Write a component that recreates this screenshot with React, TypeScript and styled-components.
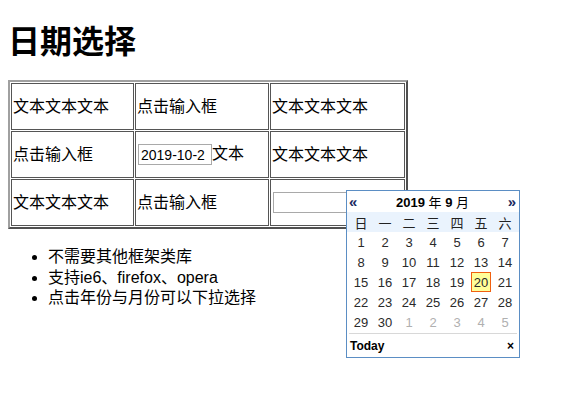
import React from "react";
import styled, { createGlobalStyle } from "styled-components";

const Global = createGlobalStyle`
  html, body { background: #fff; margin: 0; padding: 0; }
  body {
    font-family: "Liberation Sans", "Noto Sans CJK SC", sans-serif;
    color: #000;
  }
`;

const Page = styled.div`
  position: relative;
  display: flow-root;
  box-sizing: border-box;
  min-height: 416px;
  padding: 8px;
`;

const Title = styled.h1`
  font-size: 32px;
  font-weight: bold;
  line-height: 37px;
  margin: 15.5px 0 19.5px;
`;

const Table = styled.table`
  width: 400px;
  border-collapse: separate;
  border-spacing: 1px;
  border: 2px solid;
  border-color: #a0a0a0 #505050 #505050 #a0a0a0;
  table-layout: fixed;
`;

const Cell = styled.td<{ $w?: number }>`
  width: ${(p) => (p.$w ? `${p.$w}px` : "auto")};
  height: 47px;
  box-sizing: border-box;
  border: 1px solid #555;
  padding: 1px;
  font-size: 16px;
  line-height: 20px;
  vertical-align: middle;
  white-space: nowrap;
`;

const DateInput = styled.input`
  box-sizing: border-box;
  width: 74px;
  height: 21px;
  border: 1px solid #a9a9a9;
  padding: 1px 2px;
  font-family: "Liberation Sans", sans-serif;
  font-size: 14px;
  vertical-align: middle;
  margin: 0 0 0 1px;
  outline: none;
  background: #fff;
`;

const List = styled.ul`
  margin: 18px 0 16px;
  padding-left: 40px;
  font-size: 16px;
  line-height: 20.5px;
`;

const Picker = styled.div`
  position: absolute;
  left: 346px;
  top: 190px;
  width: 174px;
  height: 168px;
  box-sizing: border-box;
  border: 1px solid #5b8ec4;
  background: #fff;
  font-family: "Liberation Sans", "Noto Sans CJK SC", sans-serif;
  font-size: 12px;
  display: flex;
  flex-direction: column;
`;

const Header = styled.div`
  height: 21px;
  flex: none;
  display: flex;
  align-items: center;
  justify-content: space-between;
  padding: 0 3px 0 2px;
  font-size: 13px;
`;

const Nav = styled.span`
  font-weight: bold;
  font-size: 15px;
  color: #1a2a60;
`;

const Month = styled.span`
  color: #000;
  b { font-weight: bold; }
`;

const Grid = styled.div`
  display: grid;
  flex: none;
  grid-template-columns: repeat(7, 24px);
  padding: 0 2px;
`;

const WeekRow = styled(Grid)`
  background: #eaf3fd;
  height: 20px;
  align-items: center;
`;

const WeekDay = styled.span`
  text-align: center;
  font-size: 13px;
  color: #222;
`;

const Days = styled(Grid)`
  grid-auto-rows: 20px;
`;

const Day = styled.span<{ $other?: boolean; $sel?: boolean }>`
  justify-self: center;
  width: 20px;
  height: 20px;
  box-sizing: border-box;
  display: flex;
  align-items: center;
  justify-content: center;
  font-size: 13px;
  color: ${(p) => (p.$other ? "#b0b0b0" : "#2a2a2a")};
  background: ${(p) => (p.$sel ? "#ffff99" : "transparent")};
  border: ${(p) => (p.$sel ? "1px solid #f06010" : "none")};
`;

const Footer = styled.div`
  margin: 1px 2px 0;
  border-top: 1px solid #d8d8d8;
  flex: 1;
  display: flex;
  align-items: center;
  justify-content: space-between;
  padding: 0 3px 0 1px;
`;

const Today = styled.span`
  font-weight: bold;
  font-size: 12px;
`;

const Close = styled.span`
  font-size: 12px;
  font-weight: bold;
`;

const weekdays = ["日", "一", "二", "三", "四", "五", "六"];

export default function App() {
  const days: { n: number; other?: boolean }[] = [];
  for (let i = 1; i <= 30; i++) days.push({ n: i });
  for (let i = 1; i <= 5; i++) days.push({ n: i, other: true });

  return (
    <Page>
      <Global />
      <Title>日期选择</Title>
      <Table>
        <tbody>
          <tr>
            <Cell $w={123}>文本文本文本</Cell>
            <Cell $w={134}>点击输入框</Cell>
            <Cell>文本文本文本</Cell>
          </tr>
          <tr>
            <Cell>点击输入框</Cell>
            <Cell>
              <DateInput defaultValue="2019-10-2" />文本
            </Cell>
            <Cell>文本文本文本</Cell>
          </tr>
          <tr>
            <Cell>文本文本文本</Cell>
            <Cell>点击输入框</Cell>
            <Cell>
              <DateInput defaultValue="" />
            </Cell>
          </tr>
        </tbody>
      </Table>
      <List>
        <li>不需要其他框架类库</li>
        <li>支持ie6、firefox、opera</li>
        <li>点击年份与月份可以下拉选择</li>
      </List>
      <Picker>
        <Header>
          <Nav>«</Nav>
          <Month>
            <b>2019</b> 年 <b>9</b> 月
          </Month>
          <Nav>»</Nav>
        </Header>
        <WeekRow>
          {weekdays.map((w) => (
            <WeekDay key={w}>{w}</WeekDay>
          ))}
        </WeekRow>
        <Days>
          {days.map((d, i) => (
            <Day key={i} $other={d.other} $sel={!d.other && d.n === 20}>
              {d.n}
            </Day>
          ))}
        </Days>
        <Footer>
          <Today>Today</Today>
          <Close>×</Close>
        </Footer>
      </Picker>
    </Page>
  );
}
